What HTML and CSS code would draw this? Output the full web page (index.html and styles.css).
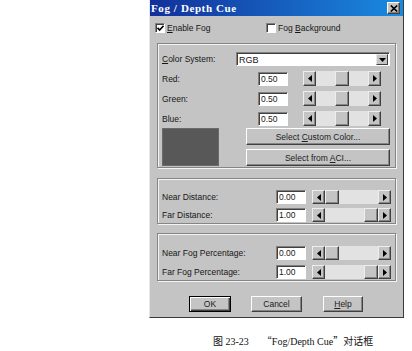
FILE: index.html
```html
<!DOCTYPE html>
<html lang="zh">
<head>
  <meta charset="UTF-8">
  <title>Fog / Depth Cue</title>
  <link rel="stylesheet" href="styles.css">
</head>
<body>
  <div class="page">
    <div class="dialog">
      <div class="titlebar">
        <span class="title">Fog / Depth Cue</span>
        <span class="close"><svg width="8" height="7" viewBox="0 0 8 7"><path d="M0.8 0.5L7.2 6.5M7.2 0.5L0.8 6.5" stroke="#000" stroke-width="1.7"/></svg></span>
      </div>

      <div class="checks">
        <div class="check first">
          <span class="box"><svg width="7" height="7" viewBox="0 0 7 7"><path d="M0.5 2.8L2.6 5L6.6 0.8" stroke="#000" stroke-width="1.7" fill="none"/></svg></span>
          <span><u>E</u>nable Fog</span>
        </div>
        <div class="check">
          <span class="box"></span>
          <span>Fog <u>B</u>ackground</span>
        </div>
      </div>

      <!-- color -->
      <div class="group g-color">
        <div class="row">
          <span class="label lw-combo"><u>C</u>olor System:</span>
          <div class="combo">
            <span class="combo-text">RGB</span>
            <span class="drop"><svg width="7" height="4" viewBox="0 0 7 4"><path d="M0 0H7L3.5 4Z"/></svg></span>
          </div>
        </div>
        <div class="row tall">
          <span class="label lw-rgb">Red:</span>
          <span class="edit">0.50</span>
          <div class="scroll s-rgb">
            <span class="sbtn"><svg width="4" height="7" viewBox="0 0 4 7"><path d="M4 0V7L0 3.5Z"/></svg></span>
            <span class="track mid"><span class="thumb"></span></span>
            <span class="sbtn"><svg width="4" height="7" viewBox="0 0 4 7"><path d="M0 0V7L4 3.5Z"/></svg></span>
          </div>
        </div>
        <div class="row tall">
          <span class="label lw-rgb">Green:</span>
          <span class="edit">0.50</span>
          <div class="scroll s-rgb">
            <span class="sbtn"><svg width="4" height="7" viewBox="0 0 4 7"><path d="M4 0V7L0 3.5Z"/></svg></span>
            <span class="track mid"><span class="thumb"></span></span>
            <span class="sbtn"><svg width="4" height="7" viewBox="0 0 4 7"><path d="M0 0V7L4 3.5Z"/></svg></span>
          </div>
        </div>
        <div class="row tall">
          <span class="label lw-rgb">Blue:</span>
          <span class="edit">0.50</span>
          <div class="scroll s-rgb">
            <span class="sbtn"><svg width="4" height="7" viewBox="0 0 4 7"><path d="M4 0V7L0 3.5Z"/></svg></span>
            <span class="track mid"><span class="thumb"></span></span>
            <span class="sbtn"><svg width="4" height="7" viewBox="0 0 4 7"><path d="M0 0V7L4 3.5Z"/></svg></span>
          </div>
        </div>
        <div class="swatch-row">
          <div class="swatch"></div>
          <div class="color-btns">
            <div class="btn"><span>Select <u>C</u>ustom Color...</span></div>
            <div class="btn"><span>Select from <u>A</u>CI...</span></div>
          </div>
        </div>
      </div>

      <!-- distance -->
      <div class="group g-dist">
        <div class="row">
          <span class="label lw-dist">Near Distance:</span>
          <span class="edit">0.00</span>
          <div class="scroll s-dist">
            <span class="sbtn"><svg width="4" height="7" viewBox="0 0 4 7"><path d="M4 0V7L0 3.5Z"/></svg></span>
            <span class="track min"><span class="thumb"></span></span>
            <span class="sbtn"><svg width="4" height="7" viewBox="0 0 4 7"><path d="M0 0V7L4 3.5Z"/></svg></span>
          </div>
        </div>
        <div class="row">
          <span class="label lw-dist">Far Distance:</span>
          <span class="edit">1.00</span>
          <div class="scroll s-dist">
            <span class="sbtn"><svg width="4" height="7" viewBox="0 0 4 7"><path d="M4 0V7L0 3.5Z"/></svg></span>
            <span class="track max"><span class="thumb"></span></span>
            <span class="sbtn"><svg width="4" height="7" viewBox="0 0 4 7"><path d="M0 0V7L4 3.5Z"/></svg></span>
          </div>
        </div>
      </div>

      <!-- percentage -->
      <div class="group g-perc">
        <div class="row">
          <span class="label lw-dist">Near Fog Percentage:</span>
          <span class="edit">0.00</span>
          <div class="scroll s-dist">
            <span class="sbtn"><svg width="4" height="7" viewBox="0 0 4 7"><path d="M4 0V7L0 3.5Z"/></svg></span>
            <span class="track min"><span class="thumb"></span></span>
            <span class="sbtn"><svg width="4" height="7" viewBox="0 0 4 7"><path d="M0 0V7L4 3.5Z"/></svg></span>
          </div>
        </div>
        <div class="row">
          <span class="label lw-dist">Far Fog Percentage:</span>
          <span class="edit">1.00</span>
          <div class="scroll s-dist">
            <span class="sbtn"><svg width="4" height="7" viewBox="0 0 4 7"><path d="M4 0V7L0 3.5Z"/></svg></span>
            <span class="track max"><span class="thumb"></span></span>
            <span class="sbtn"><svg width="4" height="7" viewBox="0 0 4 7"><path d="M0 0V7L4 3.5Z"/></svg></span>
          </div>
        </div>
      </div>

      <div class="actions">
        <div class="btn b-ok">OK</div>
        <div class="btn b-cancel">Cancel</div>
        <div class="btn b-help"><span><u>H</u>elp</span></div>
      </div>
    </div>

    <div class="caption">图 23-23<span class="gap"></span><span class="q">“</span>Fog/Depth Cue<span class="q">”</span>对话框</div>
  </div>
</body>
</html>
```

FILE: styles.css
```css
html, body {
  margin: 0;
  padding: 0;
  background: #fff;
  font-family: "Liberation Sans", Arial, sans-serif;
  font-size: 8.5px;
  color: #161616;
}
.page {
  padding-left: 149px;
}
.dialog {
  width: 255px;
  height: 318px;
  box-sizing: border-box;
  background: #c4c4c4;
  border-left: 1px solid #e6e6e6;
  border-right: 1px solid #3a3a3a;
  border-bottom: 1px solid #3a3a3a;
  display: flex;
  flex-direction: column;
}

/* title bar */
.titlebar {
  height: 16px;
  display: flex;
  align-items: center;
  justify-content: space-between;
  background: linear-gradient(90deg, #12309a, #1a8ae0);
}
.title {
  color: #fff;
  font-family: "Liberation Serif", serif;
  font-weight: bold;
  font-size: 11px;
  letter-spacing: 0.6px;
  padding-left: 1px;
}
.close {
  width: 13px;
  height: 12px;
  margin-right: 3px;
  box-sizing: border-box;
  background: #c4c4c4;
  border: 1px solid;
  border-color: #fff #404040 #404040 #fff;
  box-shadow: inset -1px -1px #808080;
  display: flex;
  align-items: center;
  justify-content: center;
}

/* checkboxes */
.checks {
  display: flex;
  margin-top: 6px;
  height: 11px;
  padding-left: 5px;
}
.check {
  display: flex;
  align-items: center;
  gap: 2px;
}
.check.first {
  width: 111px;
}
.box {
  width: 10px;
  height: 10px;
  box-sizing: border-box;
  background: #fff;
  border: 1px solid;
  border-color: #808080 #fff #fff #808080;
  box-shadow: inset 1px 1px #404040;
  display: flex;
  align-items: center;
  justify-content: center;
  padding: 1px 0 0 1px;
}

/* group boxes */
.group {
  margin-left: 7px;
  width: 239px;
  box-sizing: border-box;
  border: 1px solid #858585;
  box-shadow: inset 1px 1px #f4f4f4, 1px 1px #f4f4f4;
  padding-left: 4px;
  display: flex;
  flex-direction: column;
}
.g-color {
  margin-top: 10px;
  height: 125px;
  padding-top: 8px;
  gap: 5px;
}
.g-dist {
  margin-top: 10px;
  height: 46px;
  padding-top: 11px;
  gap: 4px;
}
.g-perc {
  margin-top: 9px;
  height: 48px;
  padding-top: 12px;
  gap: 5px;
}

.row {
  display: flex;
  align-items: center;
  height: 14px;
}
.row.tall {
  height: 15px;
}
.label {
  flex: none;
}
.lw-combo { width: 74px; }
.lw-rgb { width: 96px; }
.lw-dist { width: 114px; }

.combo {
  width: 154px;
  height: 14px;
  box-sizing: border-box;
  background: #fff;
  border: 1px solid;
  border-color: #808080 #fff #fff #808080;
  box-shadow: inset 1px 1px #404040;
  display: flex;
  align-items: center;
  justify-content: space-between;
  padding: 1px 1px 0 2px;
}
.combo-text {
  font-size: 9px;
}
.drop {
  width: 12px;
  height: 11px;
  box-sizing: border-box;
  background: #c4c4c4;
  border: 1px solid;
  border-color: #e8e8e8 #404040 #404040 #e8e8e8;
  display: flex;
  align-items: center;
  justify-content: center;
}

.edit {
  width: 30px;
  height: 14px;
  box-sizing: border-box;
  background: #fff;
  border: 1px solid;
  border-color: #808080 #fff #fff #808080;
  box-shadow: inset 1px 1px #404040;
  padding: 1px 0 0 2px;
  line-height: 11px;
  color: #202020;
}

/* scroll bars */
.scroll {
  display: flex;
  height: 15px;
}
.s-rgb {
  width: 78px;
  margin-left: 15px;
}
.s-dist {
  width: 79px;
  height: 14px;
  margin-left: 6px;
}
.sbtn, .thumb {
  width: 13px;
  height: 100%;
  box-sizing: border-box;
  background: #c4c4c4;
  border: 1px solid;
  border-color: #eeeeee #404040 #404040 #eeeeee;
  box-shadow: inset -1px -1px #858585;
  display: flex;
  align-items: center;
  justify-content: center;
}
.thumb {
  width: 14px;
  display: block;
}
.track {
  flex: 1;
  display: flex;
  background: #e2e2e2;
}
.track.min { justify-content: flex-start; }
.track.mid { justify-content: center; }
.track.max { justify-content: flex-end; }

/* swatch and color buttons */
.swatch-row {
  display: flex;
  margin-top: -3px;
}
.swatch {
  width: 57px;
  height: 38px;
  box-sizing: border-box;
  background: #585858;
  border: 1px solid #6a6a6a;
}
.color-btns {
  margin-left: 27px;
  width: 144px;
  display: flex;
  flex-direction: column;
  gap: 4px;
}
.btn {
  height: 17px;
  box-sizing: border-box;
  border: 1px solid;
  border-color: #fff #404040 #404040 #fff;
  box-shadow: inset -1px -1px #858585;
  display: flex;
  align-items: center;
  justify-content: center;
  color: #202020;
}

/* bottom buttons */
.actions {
  display: flex;
  margin-top: 15px;
  padding-left: 39px;
}
.actions .btn {
  height: 16px;
}
.b-ok {
  width: 42px;
  border: 1px solid #000;
  box-shadow: inset 1px 1px #fff, inset -1px -1px #404040, inset -2px -2px #858585;
}
.b-cancel {
  width: 51px;
  margin-left: 20px;
}
.b-help {
  width: 40px;
  margin-left: 21px;
}

.caption {
  margin-top: 15px;
  margin-left: 64px;
  font-family: "Liberation Serif", "Noto Sans CJK SC", serif;
  font-size: 10px;
  color: #111;
}
.gap {
  display: inline-block;
  width: 13px;
}
.q {
  font-family: "Noto Sans CJK SC", sans-serif;
}
```
